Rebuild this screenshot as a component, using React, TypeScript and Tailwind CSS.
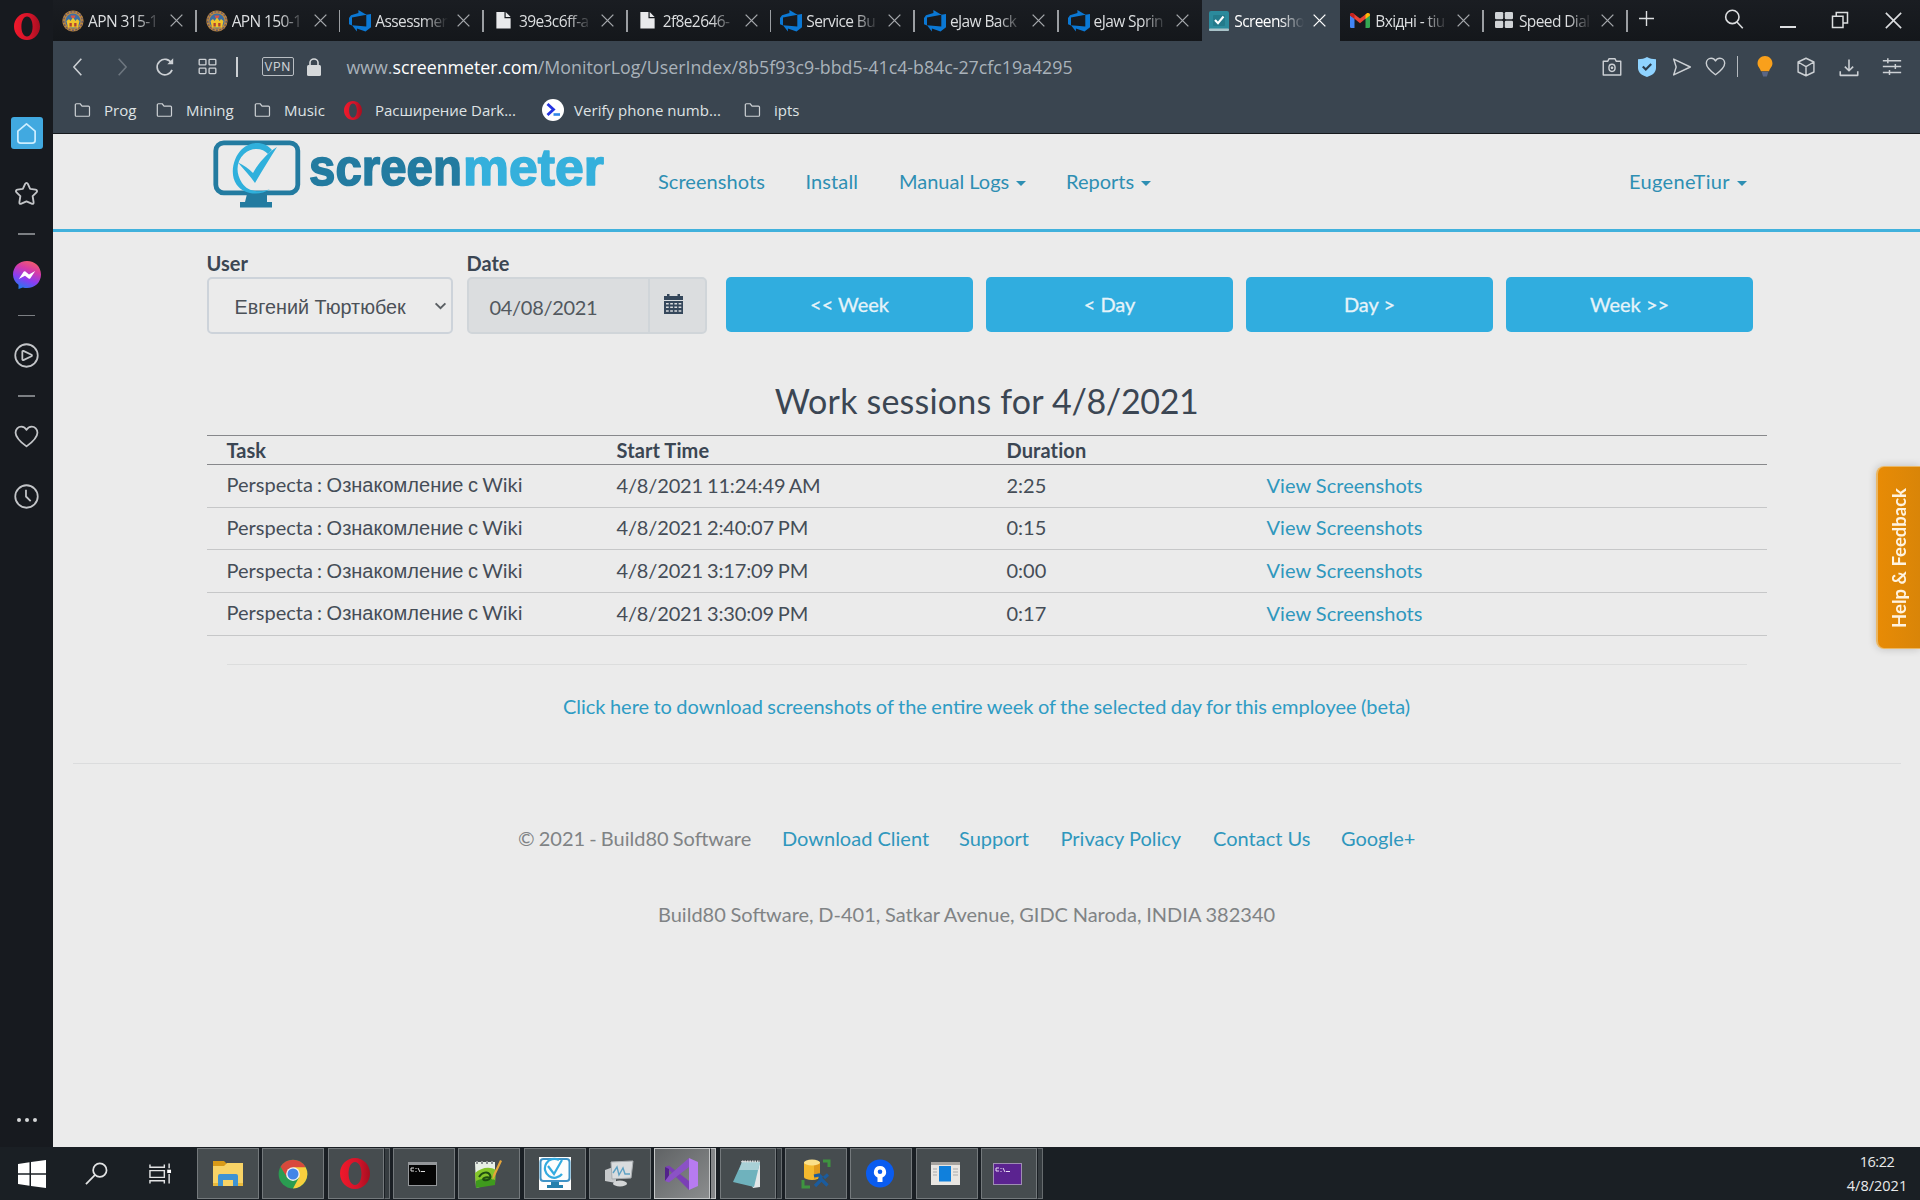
import type { ReactNode } from "react";

/* ---------- small drawings ---------- */

function OperaMark({ className }: { className: string }) {
  return (
    <svg viewBox="0 0 26 28" className={className} preserveAspectRatio="none">
      <defs>
        <linearGradient id="op" x1="0" y1="0" x2="1" y2="0">
          <stop offset="0" stopColor="#f0192b" />
          <stop offset="0.6" stopColor="#d3142a" />
          <stop offset="1" stopColor="#a50f20" />
        </linearGradient>
      </defs>
      <path fill="url(#op)" fillRule="evenodd" d="M13 0C20.2 0 26 6.2 26 14s-5.800 14-13 14S0 21.800 0 14 5.800 0 13 0Zm0 3.600c-3.400 0-5.600 4.600-5.600 10.400s2.200 10.400 5.600 10.400 5.600-4.600 5.600-10.400S16.400 3.600 13 3.600Z" />
    </svg>
  );
}

function SealIcon() {
  return (
    <svg viewBox="0 0 22 22" className="h-[22px] w-[22px]">
      <circle cx="11" cy="11" r="10.600" fill="#c08a3c" />
      <circle cx="11" cy="11" r="9.300" fill="none" stroke="#6b5a6a" strokeWidth="1.500" strokeDasharray="2 1.400" />
      <circle cx="11" cy="11" r="7.600" fill="#3c6fa3" />
      <path d="M4.500 11 7 9l1.500 2L11 7.500l2.500 3.500L15 9l2.500 2-1.500 6.500H6z" fill="#f0c32c" />
      <path d="M7.500 13h2.300v3.500H7.500zM12.200 13h2.300v3.500h-2.300z" fill="#b2402f" />
      <path d="M8.500 5.500h5l-1 2.500h-3z" fill="#d8554a" />
    </svg>
  );
}

function AzureIcon() {
  return (
    <svg viewBox="0 0 22 22" className="h-[22px] w-[22px]">
      <path fill="#0b78d4" d="M22 4v13.300l-5.500 4.300-8.600-3.100v3L3 15.300l14.300 1.100V4.700L22 4Zm-4.600.7L9.400 0v3.100L2 5.300 0 8v6.300l3 1.300V7.500l14.400-2.800Z" />
    </svg>
  );
}

function PageIcon() {
  return (
    <svg viewBox="0 0 17 20" className="ml-0.5 mr-[3px] h-[19px] w-[17px]">
      <path fill="#e9eaec" d="M1 1h8.500v6.500H16V18.500H1z" />
      <path fill="#e9eaec" d="M10.800 1 16 6.200h-5.200z" />
    </svg>
  );
}

function CheckTile() {
  return (
    <svg viewBox="0 0 20 20" className="h-[20px] w-[20px]">
      <rect width="20" height="20" rx="2" fill="#2b8a9c" />
      <rect y="17.500" width="20" height="2.500" rx="1" fill="#a9c3c9" />
      <rect x="4" y="4" width="12" height="11" rx="1" fill="#247a8b" />
      <path d="m6 9 3 3.200 5.500-6.700" fill="none" stroke="#fff" strokeWidth="2.100" />
    </svg>
  );
}

function GmailIcon() {
  return (
    <svg viewBox="0 0 20 15" className="h-[15px] w-[20px]">
      <path fill="#4285f4" d="M0 2.500 4.500 5v10H1.300A1.300 1.300 0 0 1 0 13.700z" />
      <path fill="#34a853" d="M20 2.500 15.500 5v10h3.200a1.300 1.300 0 0 0 1.300-1.300z" />
      <path fill="#ea4335" d="M0 2C0 .3 2 -.5 3.300.5L10 5.600 16.700.5C18 -.5 20 .3 20 2l-10 8.300z" />
      <path fill="#c5221f" d="M0 2C0 .3 2 -.5 3.300.5L4.500 1.400v4.500L0 2.500z" />
      <path fill="#fbbc04" d="M20 2c0-1.700-2-2.500-3.300-1.500l-1.200.9v4.500L20 2.500z" />
    </svg>
  );
}

function DialIcon() {
  return (
    <svg viewBox="0 0 18 16" className="mb-0.5 h-[16px] w-[18px]" fill="#d0d3d6">
      <rect width="8.200" height="7.300" rx="1.300" />
      <rect x="9.800" width="8.200" height="7.300" rx="1.300" />
      <rect y="8.700" width="8.200" height="7.300" rx="1.300" />
      <rect x="9.800" y="8.700" width="8.200" height="7.300" rx="1.300" />
    </svg>
  );
}

function Cross({ className, w = 1.400 }: { className: string; w?: number }) {
  return (
    <svg viewBox="0 0 14 14" className={className} fill="none" stroke="currentColor" strokeWidth={w}>
      <path d="m.7.7 12.600 12.600M13.300.7.7 13.300" />
    </svg>
  );
}

/** Thin line icon on a 24-unit grid. */
function Line({ d, size, sw = 1.700, children }: { d?: string; size: string; sw?: number; children?: ReactNode }) {
  return (
    <svg viewBox="0 0 24 24" className={size} fill="none" stroke="currentColor" strokeWidth={sw} strokeLinejoin="round">
      {d && <path d={d} />}
      {children}
    </svg>
  );
}

const HEART = "M12 21.500C8 18.500 1.500 13.500 1.500 8.300 1.500 5 4 2.500 7 2.500c2.200 0 4 1.200 5 3.200 1-2 2.800-3.200 5-3.200 3 0 5.500 2.500 5.500 5.800 0 5.200-6.500 10.200-10.500 13.200Z";

/* ---------- browser chrome ---------- */

type Tab = { icon: ReactNode; title: string; active?: boolean; bare?: boolean };

const tabs: Tab[] = [
  { icon: <SealIcon />, title: "APN 315-1" },
  { icon: <SealIcon />, title: "APN 150-1" },
  { icon: <AzureIcon />, title: "Assessmen" },
  { icon: <PageIcon />, title: "39e3c6ff-a" },
  { icon: <PageIcon />, title: "2f8e2646-" },
  { icon: <AzureIcon />, title: "Service Bu" },
  { icon: <AzureIcon />, title: "eJaw Back" },
  { icon: <AzureIcon />, title: "eJaw Sprin", bare: true },
  { icon: <CheckTile />, title: "Screensho", active: true },
  { icon: <GmailIcon />, title: "Вхідні - tiu" },
  { icon: <DialIcon />, title: "Speed Dial" },
];

function TabStrip() {
  return (
    <div className="flex h-[41px] bg-gradient-to-b from-[#1a1d22] to-[#14171b] text-[#dcdee0]">
      {tabs.map((t, i) => (
        <div
          key={i}
          className={`flex h-full shrink-0 items-center ${t.active ? "w-[138px] bg-[#3a4550] pl-[6px] text-white" : "w-[143.670px] pl-[9px]"}`}
        >
          <div className="flex w-[22px] shrink-0 items-center justify-center">{t.icon}</div>
          <div
            className={`ml-1 h-5 shrink-0 overflow-hidden whitespace-nowrap text-[15.500px] leading-5 tracking-[-0.600px] [mask-image:linear-gradient(to_right,black_66%,transparent)] ${
              t.active ? "w-[70px]" : "w-[73px]"
            }`}
          >
            {t.title}
          </div>
          <Cross className={`ml-[9px] h-[13px] w-[13px] shrink-0 ${t.active ? "text-white" : "text-[#a5a8ac]"}`} />
          {!t.active && !t.bare && <div className="ml-auto h-[22px] w-[1.500px] bg-[#9b9ea2]" />}
        </div>
      ))}
      <div className="flex flex-1 items-center pr-[18px] text-[#dcdee0]">
        <Line size="ml-[11px] mb-1 h-[15px] w-[15px]" sw={2.200} d="M12 0v24M0 12h24" />
        <Line size="ml-[70px] mb-1 h-[20px] w-[20px]" sw={1.900}>
          <circle cx="10" cy="9.500" r="8" />
          <path d="m15.500 15.500 7 7.500" />
        </Line>
        <div className="ml-[36px] mt-[13px] h-[1.500px] w-[16px] bg-[#dcdee0]" />
        <Line size="ml-[35px] mb-0.5 h-[18px] w-[18px]" sw={2}>
          <path d="M2 7h14v15H2zM7 7V2h15v14h-6" strokeLinejoin="miter" />
        </Line>
        <Cross className="ml-auto h-[17px] w-[17px]" w={1.300} />
      </div>
    </div>
  );
}

function Toolbar() {
  return (
    <div className="flex h-[51px] items-center text-[#ccd0d4]">
      <Line size="ml-[15px] h-[20px] w-[20px]" sw={1.900} d="M16 2 7 12l9 10" />
      <Line size="ml-[24px] h-[20px] w-[20px] text-[#6d767f]" sw={1.900} d="m8 2 9 10-9 10" />
      <Line size="ml-[23px] h-[20px] w-[20px]" sw={2}>
        <path d="M20.500 15.500A9.300 9.300 0 1 1 20 7.500" />
        <path d="M21.800 1.500v7.200h-7z" fill="currentColor" stroke="none" />
      </Line>
      <Line size="ml-[23px] h-[19px] w-[19px]" sw={1.700}>
        <rect x="1.500" y="3" width="8.500" height="7" rx="1" />
        <rect x="14" y="3" width="8.500" height="7" rx="1" />
        <rect x="1.500" y="14" width="8.500" height="7" rx="1" />
        <rect x="14" y="14" width="8.500" height="7" rx="1" />
      </Line>
      <div className="ml-[19px] h-[20px] w-[1.500px] bg-[#ccd0d4]" />
      <div className="ml-[24px] flex h-[19px] w-[32px] items-center justify-center rounded-[2px] border-[1.500px] border-[#b9bec3] font-['Inter'] text-[12px] leading-none tracking-[0.500px]">VPN</div>
      <svg viewBox="0 0 14 18" className="ml-[13px] h-[18px] w-[14px]">
        <rect y="7" width="14" height="11" rx="1.500" fill="#d5d8da" />
        <path d="M3 8V4.500a4 3.500 0 0 1 8 0V8" fill="none" stroke="#d5d8da" strokeWidth="1.600" />
      </svg>
      <div className="ml-[26px] whitespace-nowrap text-[17.770px] leading-6 text-[#a9b2ba]">
        www.<span className="text-white">screenmeter.com</span>/MonitorLog/UserIndex/8b5f93c9-bbd5-41c4-b84c-27cfc19a4295
      </div>
      <div className="ml-auto flex items-center pr-[18px]">
        <Line size="h-[20px] w-[20px]" sw={1.700}>
          <path d="M1.500 5H7l1.500-3h7L17 5h5.500v16.500h-21z" />
          <ellipse cx="12" cy="13" rx="3.700" ry="4.300" />
          <circle cx="12" cy="13" r="0.800" />
        </Line>
        <svg viewBox="0 0 18 20" className="ml-[16px] h-[20px] w-[18px]">
          <path d="M9 0c2.500 1.500 5.500 2.200 9 2.200V11c0 4.500-4 7.500-9 9-5-1.500-9-4.500-9-9V2.200C3.500 2.200 6.500 1.500 9 0Z" fill="#8fd3ff" />
          <path d="m4.800 9.500 3 3 5.400-5.600" fill="none" stroke="#2c3d4d" strokeWidth="2.200" />
        </svg>
        <Line size="ml-[16px] h-[20px] w-[20px]" sw={1.700} d="M2 2.500 22 12 2 21.500 5 12z" />
        <Line size="ml-[13px] h-[21px] w-[21px]" sw={1.600} d={HEART} />
        <div className="ml-[11px] h-[21px] w-[1.500px] bg-[#b5babf]" />
        <svg viewBox="0 0 16 22" className="ml-[19px] mb-[1px] h-[21px] w-[16px]">
          <path d="M8 0c4.400 0 7.800 3.400 7.800 7.800 0 3.200-2.600 4.600-3.600 8.200H3.800C2.800 12.400.2 11 .2 7.800.2 3.400 3.600 0 8 0Z" fill="#f9a01b" />
          <path d="M4.500 16.500h7L10 21.500H6z" fill="#5a6685" />
        </svg>
        <Line size="ml-[23px] h-[20px] w-[20px]" sw={1.700} d="M12 1.500 21.500 6v12L12 22.500 2.500 18V6zM2.500 6 12 11.500 21.500 6M12 11.500v11" />
        <Line size="ml-[23px] h-[20px] w-[20px]" sw={1.900} d="M12 3v13M7 11.500l5 5 5-5M1.500 17v5h21v-5" />
        <Line size="ml-[23px] h-[20px] w-[20px]" sw={1.800} d="M1 4.500h22M1 11.500h22M1 18.500h22M7 1.500v6M16 8.500v6M9 15.500v6" />
      </div>
    </div>
  );
}

function Folder() {
  return (
    <svg viewBox="0 0 17 15" className="h-[14px] w-[17px]" fill="none" stroke="#cdd1d4" strokeWidth="1.300" strokeLinejoin="round">
      <path d="M.8 13V2a1.200 1.200 0 0 1 1.200-1.200h4l2 2.500h6.800a1.200 1.200 0 0 1 1.200 1.200V13a1.200 1.200 0 0 1-1.200 1.200H2A1.200 1.200 0 0 1 .8 13Z" />
    </svg>
  );
}

function Bookmarks() {
  return (
    <div className="flex h-[42px] items-center whitespace-nowrap border-b-[1.500px] border-[#16191d] pb-[5px] pl-[21px] text-[15px] leading-5 text-[#dfe2e4]">
      <Folder />
      <span className="ml-[13px] w-[52px]">Prog</span>
      <Folder />
      <span className="ml-[13px] w-[68px]">Mining</span>
      <Folder />
      <span className="ml-[13px] w-[60px]">Music</span>
      <OperaMark className="h-[19px] w-[18px]" />
      <span className="ml-[13px] w-[167px] tracking-[-0.030px]">Расширение Dark...</span>
      <svg viewBox="0 0 22 22" className="h-[22px] w-[22px]">
        <circle cx="11" cy="11" r="11" fill="#fff" />
        <path d="m5.500 5 6 5.500-6 5.500" fill="none" stroke="#2433e0" strokeWidth="2.800" />
        <path d="M11.500 15.500H18" stroke="#2f86e8" strokeWidth="2.600" />
      </svg>
      <span className="ml-[10px] w-[170px] tracking-[0.050px]">Verify phone numb...</span>
      <Folder />
      <span className="ml-[13px]">ipts</span>
    </div>
  );
}

function Sidebar() {
  const dash = "h-[1.500px] w-[17px] bg-[#7c7f83]";
  return (
    <div className="flex w-[53px] shrink-0 flex-col items-center bg-[#171a1f] text-[#c3c5c8]">
      <OperaMark className="mt-[13px] h-[27px] w-[26px]" />
      <div className="mt-[77px] flex h-[32px] w-[32px] items-center justify-center rounded-[3px] bg-[#41a9e0] text-[#cdeeff]">
        <Line size="h-[23px] w-[23px]" sw={1.800} d="M3 9.500 12 2l9 7.500v9.500a3 3 0 0 1-3 3H6a3 3 0 0 1-3-3z" />
      </div>
      <Line size="mt-[32px] h-[25px] w-[25px]" sw={1.800} d="M12 1.800c.7 0 1 .4 1.300 1L15.500 7.500l5.200.8c1.500.3 1.900 1.600.9 2.600l-3.700 3.600.9 5.800c.2 1.400-.6 2-1.900 1.400L12 19.600l-4.900 2.100c-1.300.6-2.100 0-1.900-1.400l.9-5.800-3.700-3.600c-1-1-.6-2.300.9-2.600l5.200-.8 2.200-4.700c.3-.6.6-1 1.300-1Z" />
      <div className={`mt-[27px] ${dash}`} />
      <svg viewBox="0 0 28 28" className="mt-[26px] h-[28px] w-[28px]">
        <defs>
          <linearGradient id="ms" x1="0.300" y1="1" x2="0.700" y2="0">
            <stop offset="0" stopColor="#1f7bf0" />
            <stop offset="0.350" stopColor="#8a3df2" />
            <stop offset="0.700" stopColor="#d83ba5" />
            <stop offset="1" stopColor="#f2606a" />
          </linearGradient>
        </defs>
        <path fill="url(#ms)" d="M14 0c8 0 14 5.800 14 13.500S22 27 14 27c-1.500 0-2.800-.2-4.100-.6L5.500 28v-4.200C2 21.300 0 17.800 0 13.500 0 5.800 6 0 14 0Z" />
        <path fill="#fff" d="m5.800 18 4.800-7.200c.5-.6 1.200-.7 1.800-.3l3.600 2.900 6.200-3.300-4.800 7.100c-.5.600-1.200.7-1.800.3L12 14.800z" />
      </svg>
      <div className={`mt-[26px] ${dash}`} />
      <Line size="mt-[27px] h-[25px] w-[25px]" sw={1.700}>
        <circle cx="12" cy="12" r="10.800" />
        <path d="M8 8.300v7.400c0 .6.500.9 1 .7l7.800-3.700c.6-.3.600-1.100 0-1.400L9 7.600c-.5-.2-1 .1-1 .7Z" />
      </Line>
      <div className={`mt-[27px] ${dash}`} />
      <Line size="mt-[27px] h-[25px] w-[25px]" sw={1.700} d={HEART} />
      <Line size="mt-[35px] h-[25px] w-[25px]" sw={1.700}>
        <circle cx="12" cy="12" r="10.800" />
        <path d="M11.500 5.500V12l4.500 4.500" />
      </Line>
      <div className="mb-[25px] mt-auto flex gap-1">
        <i className="h-1 w-1 rounded-full bg-[#d5d6d8]" />
        <i className="h-1 w-1 rounded-full bg-[#d5d6d8]" />
        <i className="h-1 w-1 rounded-full bg-[#d5d6d8]" />
      </div>
    </div>
  );
}

/* ---------- page ---------- */

function Logo() {
  return (
    <svg viewBox="0 0 394 70" className="h-[70px] w-[394px] shrink-0">
      <rect x="2.800" y="2.800" width="82" height="50" rx="8" fill="none" stroke="#237ba0" strokeWidth="4.800" />
      <path d="M34 54h20v8h5v5.500H27V62h5z" fill="#237ba0" />
      <path d="M59 10C52 1 38 .5 29 9s-12.500 25.500-5.500 35.500 23 12 33.500 4.500c-9 4-21.500 3.500-28-6S23 21.500 31 14s19-6 24 0z" fill="#2fb0dc" />
      <path d="M25 22.500c6 2.500 11 6.500 15 10.500 5-9 13-19 24-26-6.500 10.500-14 22-22 36C37 36 31 29.500 25 22.500Z" fill="#2fb0dc" />
      <g fontFamily="Liberation Sans" fontWeight="700" fontSize="52" strokeWidth="1.600" strokeLinejoin="round">
        <text x="96" y="44.500" textLength="153" lengthAdjust="spacingAndGlyphs" fill="#237ba0" stroke="#237ba0">screen</text>
        <text x="250" y="44.500" textLength="141" lengthAdjust="spacingAndGlyphs" fill="#35b0dc" stroke="#35b0dc">meter</text>
      </g>
    </svg>
  );
}

function Caret() {
  return <i className="ml-[7px] inline-block border-x-[5px] border-t-[5px] border-x-transparent border-t-current align-middle" />;
}

function PageHeader() {
  return (
    <div className="flex h-[98px] items-start border-b-[3px] border-[#41b1dc] pl-[160px] text-[20px] leading-6 text-[#2e8fb3]">
      <div className="pt-[6px]"><Logo /></div>
      <div className="ml-[51px] mt-[35px] flex gap-[40px] whitespace-nowrap">
        <span className="w-[107.500px] tracking-[0.050px]">Screenshots</span>
        <span className="w-[53.500px] tracking-[0.100px]">Install</span>
        <span className="w-[127px]">Manual Logs<Caret /></span>
        <span>Reports<Caret /></span>
      </div>
      <span className="ml-auto mr-[173px] mt-[35px] tracking-[0.350px]">EugeneTiur<Caret /></span>
    </div>
  );
}

function CalendarGlyph() {
  return (
    <svg viewBox="0 0 19 20" className="h-[20px] w-[19px]" fill="#35475b">
      <path d="M0 2h3V0h2.500v2h8V0H16v2h3v4H0z" />
      <path fillRule="evenodd" d="M0 7h19v13H0zM2 9v1.500h2.700V9zm4.200 0v1.500h2.700V9zm4.200 0v1.500h2.700V9zm4.200 0v1.500h2.700V9zM2 12.600v1.500h2.700v-1.500zm4.200 0v1.500h2.700v-1.500zm4.200 0v1.500h2.700v-1.500zm4.200 0v1.500h2.700v-1.500zM2 16.200v1.500h2.700v-1.500zm4.200 0v1.500h2.700v-1.500zm4.200 0v1.500h2.700v-1.500zm4.200 0v1.500h2.700v-1.500z" />
    </svg>
  );
}

function Filters() {
  return (
    <div className="flex text-[20px] leading-6">
      <div className="w-[260px]">
        <div className="h-[26px] font-bold">User</div>
        <div className="flex h-[57px] w-[246px] items-center justify-between rounded-[5px] border-2 border-[#cdd3da] pl-[26px] pr-[4px]">
          <span className="pt-[2px] font-['Liberation_Sans'] text-[19.800px] text-[#4b5158]">Евгений Тюртюбек</span>
          <svg viewBox="0 0 14 9" className="h-[8px] w-[13px]" fill="none" stroke="#5a5f63" strokeWidth="2.200"><path d="m1.500 1.500 5.500 5.500 5.500-5.500" /></svg>
        </div>
      </div>
      <div className="w-[260px]">
        <div className="h-[26px] font-bold">Date</div>
        <div className="flex h-[57px] w-[240px] rounded-[5px] border-2 border-[#d0d5d9] bg-[#dbdddf]">
          <div className="flex flex-1 items-center border-r-2 border-[#d0d5d9] pl-[21px] pt-[2px] tracking-[-0.300px] text-[#52585e]">04/08/2021</div>
          <div className="flex w-[55px] items-center justify-center pb-1 pr-2">
            <CalendarGlyph />
          </div>
        </div>
      </div>
      {["<< Week", "< Day", "Day >", "Week >>"].map((b) => (
        <div key={b} className="w-[260px] pt-[26px]">
          <div className="ml-[-0.500px] flex h-[55px] w-[247px] items-center justify-center rounded-[5px] bg-[#30addf] pb-[2px] text-[#e6f3f9] [-webkit-text-stroke:0.300px_#e6f3f9]">{b}</div>
        </div>
      ))}
    </div>
  );
}

const rows = [
  ["4/8/2021 11:24:49 AM", "2:25"],
  ["4/8/2021 2:40:07 PM", "0:15"],
  ["4/8/2021 3:17:09 PM", "0:00"],
  ["4/8/2021 3:30:09 PM", "0:17"],
];

function Sessions() {
  const grid = "grid grid-cols-[390px_390px_260px_520px] items-center";
  return (
    <div className="w-[1560px] text-[20px] leading-6">
      <div className={`${grid} h-[30px] border-y-[1.500px] border-[#87888b] pb-px font-bold`}>
        <span className="pl-5">Task</span>
        <span className="pl-5 tracking-[0.100px]">Start Time</span>
        <span className="pl-5 tracking-[0.100px]">Duration</span>
        <span />
      </div>
      {rows.map(([time, dur]) => (
        <div key={time} className={`${grid} h-[42.670px] border-b-[1.500px] border-[#c6c7c8] pb-[2px] text-[#454d57]`}>
          <span className="whitespace-nowrap pl-5 [word-spacing:-1px]">
            Perspecta : <span className="ml-[0.500px] font-['Liberation_Sans']">Ознакомление с</span> Wiki
          </span>
          <span className="whitespace-nowrap pl-5 tracking-[-0.150px] [word-spacing:-1px]">{time}</span>
          <span className="pl-5">{dur}</span>
          <span className="pl-5 tracking-[0.030px] text-[#2f97bd]">View Screenshots</span>
        </div>
      ))}
    </div>
  );
}

function Page() {
  return (
    <div className="relative flex flex-1 flex-col bg-[#ebebeb] font-['Lato','Liberation_Sans',sans-serif] text-[#3b4653]">
      <PageHeader />
      <div className="pl-[153.500px] pt-[19px]">
        <Filters />
        <h1 className="mt-[44px] w-[1560px] text-center text-[34px] leading-[46px]">
          <span className="tracking-[0.200px]">Work sessions for </span>
          <span className="tracking-[-0.350px]">4/8/2021</span>
        </h1>
        <div className="mt-[11px]">
          <Sessions />
        </div>
        <div className="ml-[20px] mt-[28px] h-px w-[1520px] bg-[#dcdddd]" />
        <div className="mt-[29px] w-[1560px] text-center text-[20px] leading-6 text-[#2f9cc4] [word-spacing:-0.700px]">
          Click here to download screenshots of the entire week of the selected day for this employee (beta)
        </div>
      </div>
      <div className="ml-[20px] mt-[45px] h-px w-[1828px] bg-[#dbdcdd]" />
      <div className="mt-[62px] flex whitespace-nowrap pl-[465px] text-[20px] leading-6 text-[#2f97bd]">
        <span className="w-[264px] text-[#808385] [word-spacing:-1px]">© 2021 - Build80 Software</span>
        <span className="w-[177px]">Download Client</span>
        <span className="w-[101.500px]">Support</span>
        <span className="w-[152.500px]">Privacy Policy</span>
        <span className="w-[128px]">Contact Us</span>
        <span>Google+</span>
      </div>
      <div className="mt-[52px] whitespace-nowrap pl-[605px] text-[20px] leading-6 text-[#808385] [word-spacing:-0.400px]">
        Build80 Software, D-401, Satkar Avenue, GIDC Naroda, INDIA 382340
      </div>
      <div className="absolute right-0 top-[332px] flex h-[183px] w-[44px] items-center justify-center rounded-l-[8px] border-y border-l-2 border-[#eab765] bg-gradient-to-r from-[#e88b05] to-[#d98508] shadow-[0_0_8px_rgba(0,0,0,0.200)]">
        <span className="rotate-180 whitespace-nowrap text-[18.500px] font-bold leading-none text-[#fff3e0] [writing-mode:vertical-rl]">Help &amp; Feedback</span>
      </div>
    </div>
  );
}

/* ---------- taskbar ---------- */

const apps: { icon: ReactNode; stacked?: boolean; active?: boolean }[] = [
  {
    icon: (
      <svg viewBox="0 0 30 25" className="h-[25px] w-[30px]">
        <path d="M0 0h11l3 3v4H0z" fill="#d99a17" />
        <path d="M0 5h11l3-3h16v23H0z" fill="#f8d366" />
        <path d="M5 25V15q0-2 2-2h16q2 0 2 2v10h-5v-6H10v6z" fill="#3f93d3" />
        <path d="M0 22h5v3H0zM25 22h5v3h-5z" fill="#e9b93c" />
      </svg>
    ),
  },
  {
    icon: (
      <svg viewBox="0 0 48 48" className="h-[30px] w-[30px]">
        <circle cx="24" cy="24" r="23" fill="#2a9c51" />
        <path d="M24 24 4.100 12.500A23 23 0 0 1 43.900 12.500z" fill="#d8493c" />
        <path d="M24 13h20.200A23 23 0 0 1 24 47l9.500-17.500z" fill="#f8cf3e" />
        <path d="M4.100 12.500 14.500 29.500 24 20z" fill="#d8493c" />
        <circle cx="24" cy="24" r="11" fill="#f2f2f2" />
        <circle cx="24" cy="24" r="8.800" fill="#4285e8" />
      </svg>
    ),
  },
  { icon: <OperaMark className="mr-[2px] h-[31px] w-[30px]" />, stacked: true },
  {
    icon: (
      <svg viewBox="0 0 29 24" className="mr-[2px] h-[24px] w-[29px]">
        <rect width="29" height="24" fill="#94979a" />
        <rect x="1" y="3" width="27" height="20" fill="#050505" />
        <path d="M3 6h3M3 6v3h3M8 6v1M8 9v1M10 6l2 4M13 9.500h4" stroke="#ddd" fill="none" />
      </svg>
    ),
  },
  {
    icon: (
      <svg viewBox="0 0 30 30" className="mr-[2px] h-[30px] w-[30px]">
        <path d="M2 3h20v21L3 29z" fill="#e8efe6" />
        <path d="M2 14c6-5 14-7 21-3l-1 14-19 3z" fill="#84c52a" />
        <path d="M3 22c7-3 13-3 19-1v5L3 29z" fill="#3f9a1d" />
        <path d="M6 18c3-5 9-6 11-2s-3 6-6 5 2-4 6-2" fill="none" stroke="#1f4d12" strokeWidth="2" />
        <path d="M3 2h2v3H3zM8 2h2v3H8zM13 2h2v3h-2zM18 2h2v3h-2z" fill="#8b8f92" />
        <path d="m27 1 2 1-7 15-2.500 4 .5-5z" fill="#e6a53a" />
      </svg>
    ),
  },
  {
    icon: (
      <svg viewBox="0 0 32 33" className="h-[33px] w-[32px]">
        <rect width="32" height="33" fill="#fdfdfd" />
        <rect x="1.500" y="2" width="29" height="22" rx="3" fill="none" stroke="#3f93c6" strokeWidth="2" />
        <path d="M12 25h8v3h4v3H8v-3h4z" fill="#2480ad" />
        <path d="M20 3a9.500 9.500 0 1 0 3 14M9 9l6 8L23 3" fill="none" stroke="#34abe0" strokeWidth="2.200" />
      </svg>
    ),
  },
  {
    icon: (
      <svg viewBox="0 0 30 27" className="mr-[2px] h-[27px] w-[30px]">
        <path d="M1 10 12 6v17L1 21z" fill="#c6c9cb" />
        <path d="m7 2 22-1-2 17-19 1z" fill="#d9dcde" stroke="#a9adb0" />
        <path d="m9 13 4-6 2 8 4-7 2 6h5" fill="none" stroke="#5ea1c4" strokeWidth="1.400" />
        <ellipse cx="16" cy="23.500" rx="7" ry="3" fill="#d3d5d6" />
      </svg>
    ),
  },
  {
    icon: (
      <svg viewBox="0 0 33 32" className="mr-[2px] h-[32px] w-[33px]">
        <path d="M0 9 4 7.500 24 23v9L4 12z" fill="#7b3fb5" />
        <path d="M0 9 4 11v10l-4 2z" fill="#52218a" />
        <path d="M4 24.500 24 9V0L4 17.500 0 23z" fill="#8b52c6" />
        <path d="m24 0 9 4v24l-9 4z" fill="#b77bf0" />
      </svg>
    ),
    stacked: true,
    active: true,
  },
  {
    icon: (
      <svg viewBox="0 0 30 28" className="mr-[2px] h-[28px] w-[30px]">
        <path d="m9 1 19 1v25l-7 1z" fill="#e4e7e8" />
        <path d="M10 2h18l-6 25L1 22z" fill="#6fb2bd" />
        <path d="M10 2h18l-2 8H7z" fill="#a9d0d6" />
        <path d="M10 1.500h18" stroke="#d9dcdd" strokeWidth="2" strokeDasharray="1.500 1" />
      </svg>
    ),
    stacked: true,
  },
  {
    icon: (
      <svg viewBox="0 0 30 30" className="h-[30px] w-[30px]">
        <path d="M3 3h16v15a8 3 0 0 1-16 0z" fill="#f4b92e" />
        <path d="M13 3h6v15l-6 2z" fill="#e09a1d" />
        <ellipse cx="11" cy="3.500" rx="8" ry="3" fill="#fbe08a" />
        <path d="M22 2h6v6M2 21v7h7" fill="none" stroke="#3e9440" strokeWidth="3" />
        <path d="m14 27 7-7M18 18l8.500 8.500M13 17l5-1 3 3M27 15.500l-4 3.500" fill="none" stroke="#1b5c9e" strokeWidth="3.200" />
      </svg>
    ),
  },
  {
    icon: (
      <svg viewBox="0 0 28 29" className="mr-[2px] h-[29px] w-[28px]">
        <circle cx="14" cy="14.500" r="14" fill="#0a5cf0" />
        <path fill="#fff" fillRule="evenodd" d="M14 7a6 6 0 0 1 2.500 11.500V23h-5v-4.500A6 6 0 0 1 14 7Zm0 3.500a2.300 2.300 0 1 0 0 4.600 2.300 2.300 0 0 0 0-4.600Z" />
      </svg>
    ),
  },
  {
    icon: (
      <svg viewBox="0 0 29 23" className="mr-[2px] h-[23px] w-[29px]">
        <rect width="29" height="23" fill="#e9e6e2" />
        <rect width="29" height="3" fill="#a7a4a0" />
        <path d="M2 7h4M2 10h4M2 13h4M22 7h5M22 10h5M22 13h5" stroke="#a9aaab" />
        <rect x="8" y="4" width="12" height="15.500" fill="#1080dc" />
      </svg>
    ),
  },
  {
    icon: (
      <svg viewBox="0 0 29 22" className="mr-[2px] h-[22px] w-[29px]">
        <rect x="0.500" y="0.500" width="28" height="21" fill="#5b2390" stroke="#9f8db3" />
        <path d="M3 5h3M3 5v3h3M8 5v1M8 8v1M10 5l2 4M13 8.500h4" stroke="#e7dcf3" fill="none" />
      </svg>
    ),
    stacked: true,
  },
];

function Taskbar() {
  return (
    <div className="flex h-[53px] bg-[#1a1f24] pb-px pt-px">
      <div className="flex w-[197px] items-center">
        <svg viewBox="0 0 28 28" className="ml-[18px] h-[28px] w-[28px]" fill="#fff">
          <path d="M0 4 11.500 2.300V13.300H0zM13 2 28 0v13.300H13zM0 14.800h11.500v11L0 24zM13 14.800h15V28l-15-2z" />
        </svg>
        <Line size="ml-[39px] h-[23px] w-[23px] text-[#e3e4e5]" sw={1.800}>
          <circle cx="15.500" cy="8.500" r="7" />
          <path d="M10.500 13.500 1 23" />
        </Line>
        <svg viewBox="0 0 24 22" className="ml-[41px] h-[22px] w-[23px]" fill="none" stroke="#e3e4e5" strokeWidth="1.500">
          <path d="M1 1v3h15V1M1 21v-3h15v3M1 7.500h15v7H1zM21 0v5M21 11v10" />
          <path d="M19 6.500h4v3.500h-4z" fill="#fff" stroke="none" />
        </svg>
      </div>
      <div className="flex gap-[3.330px]">
        {apps.map((a, i) => (
          <div key={i} className="flex w-[62px]">
            <div
              className={`flex h-[51px] min-w-0 flex-1 items-center justify-center border ${
                a.active ? "border-[#c5c7c8] bg-gradient-to-br from-[#606365] to-[#8b8d8e]" : "border-[#74797c] bg-[#464c4f]"
              }`}
            >
              {a.icon}
            </div>
            {a.stacked && <div className={`h-[51px] w-[6px] border ${a.active ? "border-[#c5c7c8] bg-[#858789]" : "border-[#666b6e] bg-[#363c40]"} border-l-[#1a1f24]`} />}
          </div>
        ))}
      </div>
      <div className="ml-auto flex w-[86px] flex-col items-center justify-center gap-[4px] whitespace-nowrap text-[14.500px] leading-5 text-[#e8e9ea]">
        <span className="tracking-[-0.500px]">16:22</span>
        <span>4/8/2021</span>
      </div>
    </div>
  );
}

export default function App() {
  return (
    <div className="flex h-[1200px] w-[1920px] flex-col overflow-hidden font-['Open_Sans','Noto_Sans',sans-serif]">
      <div className="flex h-[1147px]">
        <Sidebar />
        <div className="flex min-w-0 flex-1 flex-col">
          <TabStrip />
          <div className="bg-[#3a4550]">
            <Toolbar />
            <Bookmarks />
          </div>
          <Page />
        </div>
      </div>
      <Taskbar />
    </div>
  );
}
